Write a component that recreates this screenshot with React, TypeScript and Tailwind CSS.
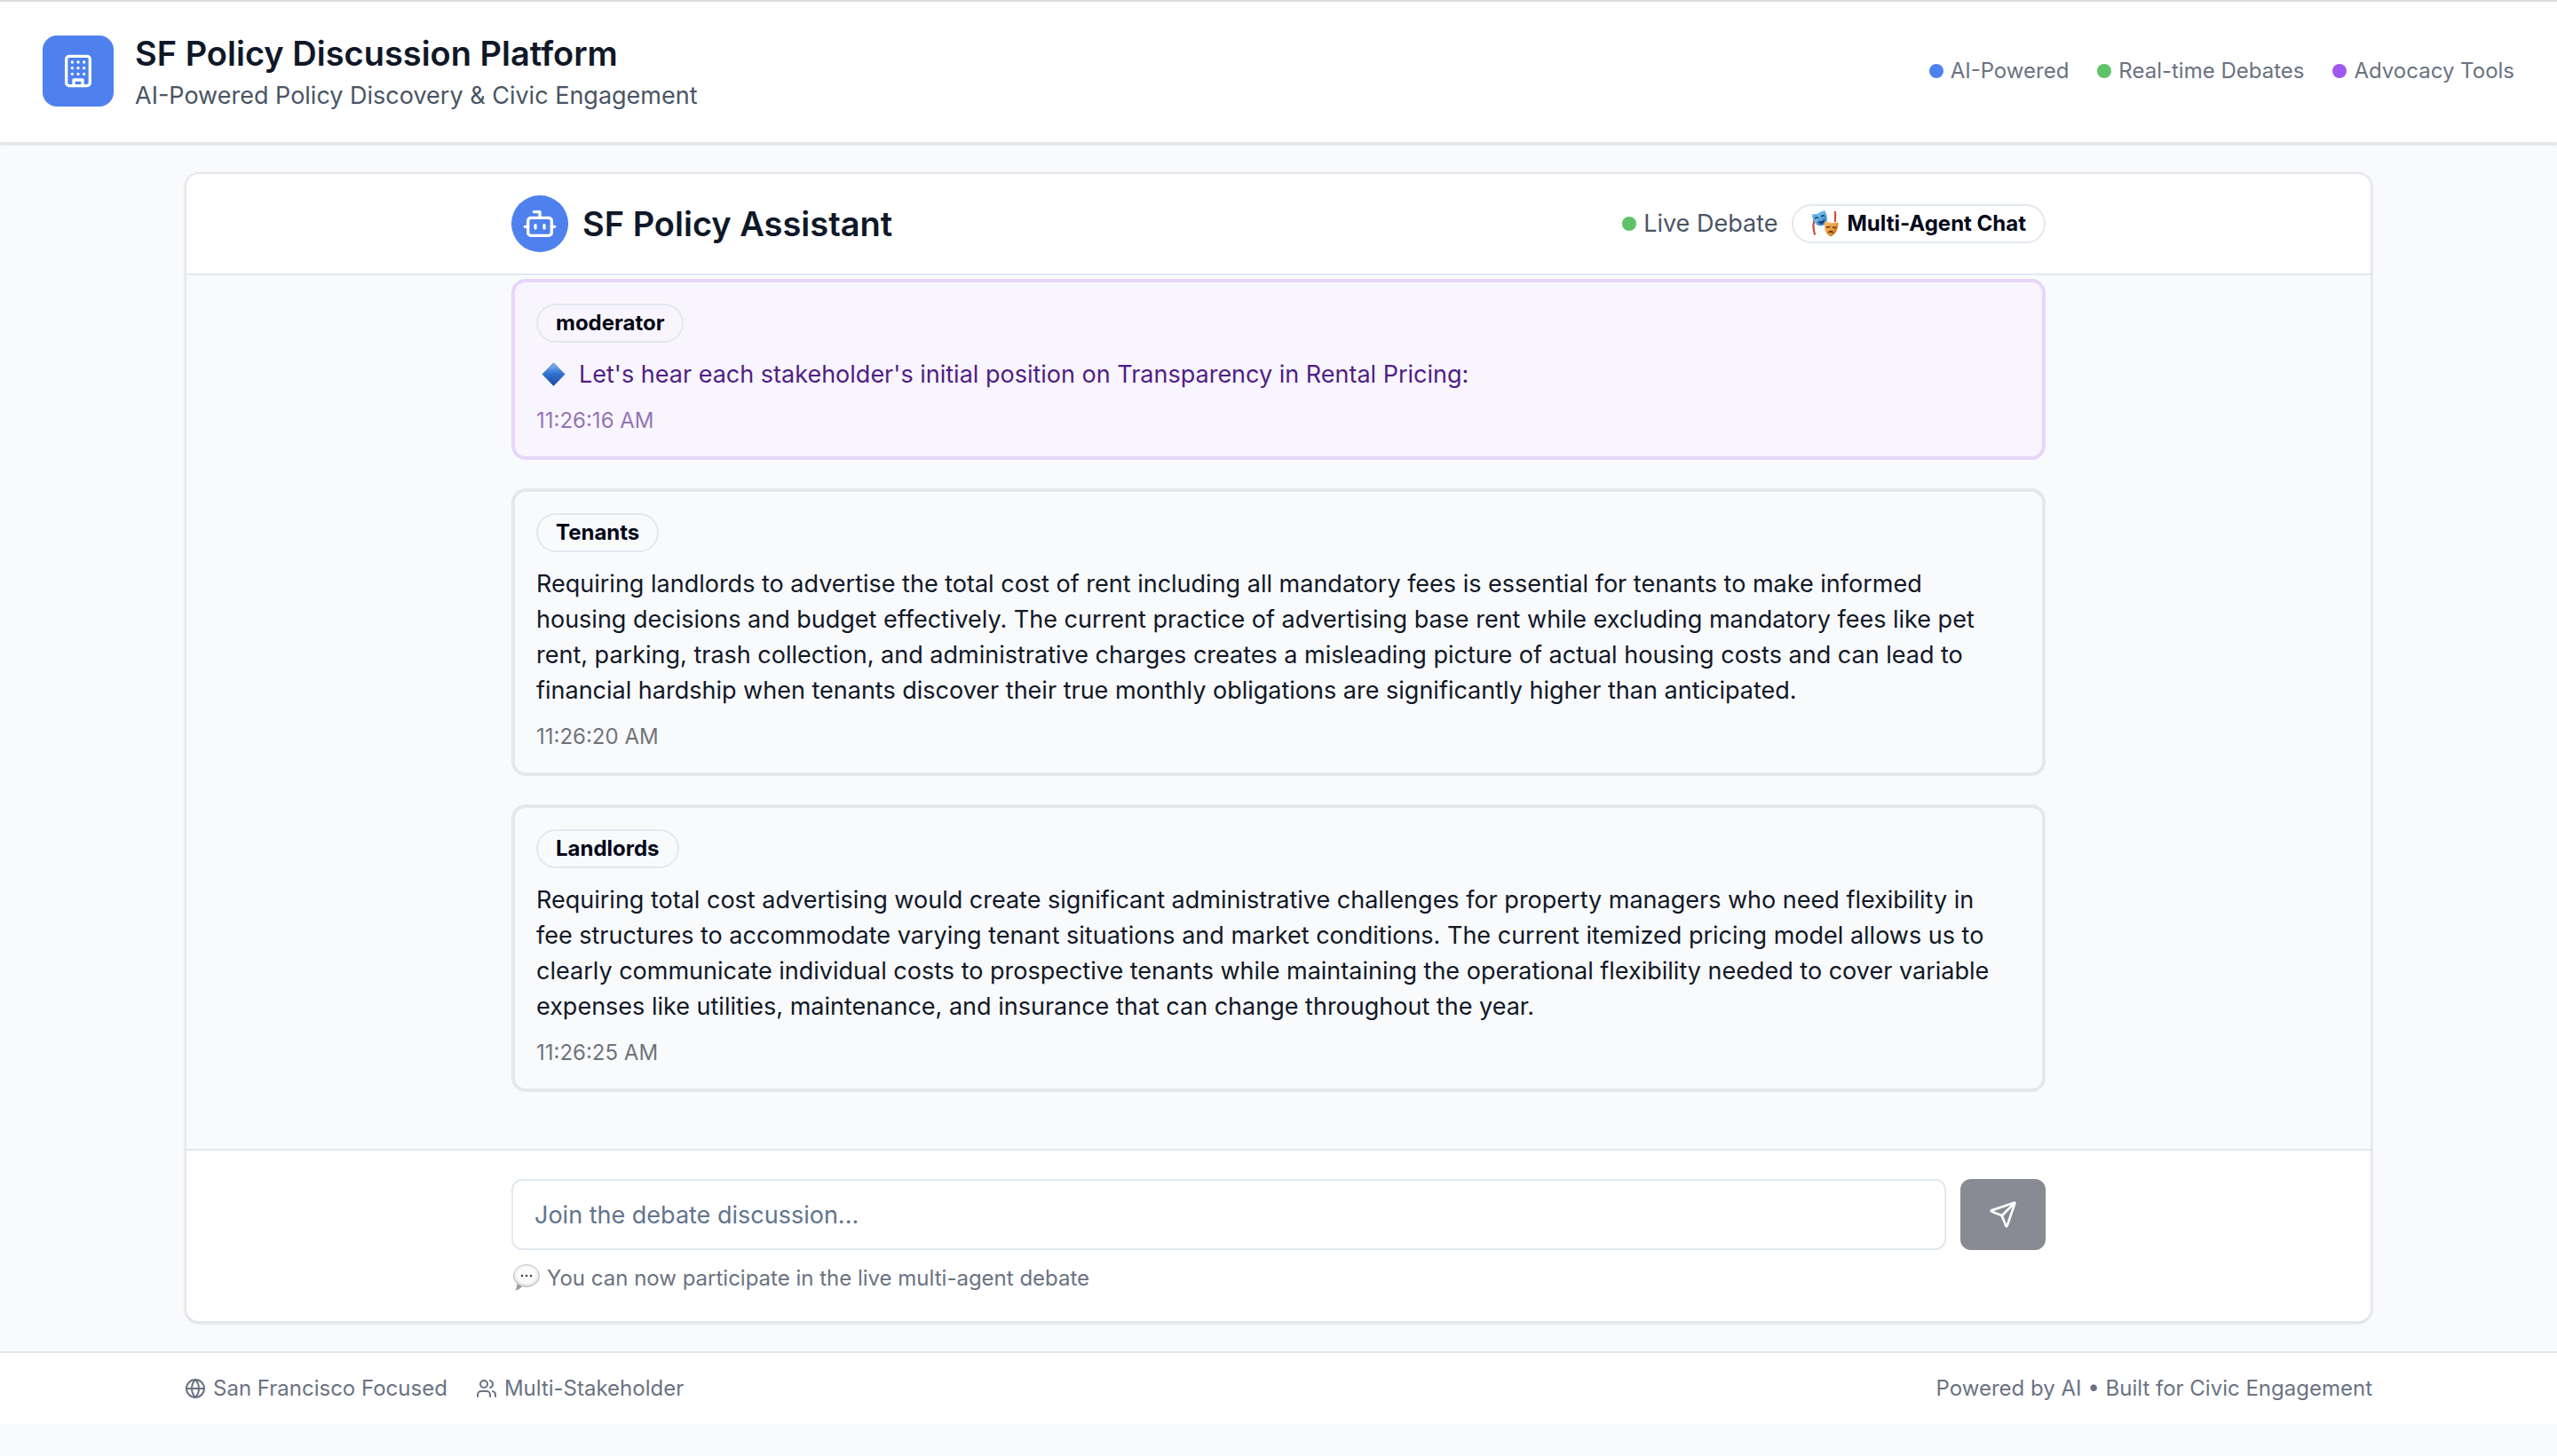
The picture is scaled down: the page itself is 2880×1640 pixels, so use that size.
import React, { useState } from 'react';
import { Bot, Globe, Send, Users } from 'lucide-react';

type Message = {
  id: number;
  speaker: string;
  text: string;
  time: string;
  kind: 'moderator' | 'stakeholder';
};

const messages: Message[] = [
  {
    id: 1,
    speaker: 'moderator',
    text: "Let's hear each stakeholder's initial position on Transparency in Rental Pricing:",
    time: '11:26:16 AM',
    kind: 'moderator',
  },
  {
    id: 2,
    speaker: 'Tenants',
    text: 'Requiring landlords to advertise the total cost of rent including all mandatory fees is essential for tenants to make informed housing decisions and budget effectively. The current practice of advertising base rent while excluding mandatory fees like pet rent, parking, trash collection, and administrative charges creates a misleading picture of actual housing costs and can lead to financial hardship when tenants discover their true monthly obligations are significantly higher than anticipated.',
    time: '11:26:20 AM',
    kind: 'stakeholder',
  },
  {
    id: 3,
    speaker: 'Landlords',
    text: 'Requiring total cost advertising would create significant administrative challenges for property managers who need flexibility in fee structures to accommodate varying tenant situations and market conditions. The current itemized pricing model allows us to clearly communicate individual costs to prospective tenants while maintaining the operational flexibility needed to cover variable expenses like utilities, maintenance, and insurance that can change throughout the year.',
    time: '11:26:25 AM',
    kind: 'stakeholder',
  },
];

const features = [
  { label: 'AI-Powered', dot: 'bg-[#4f81ee]' },
  { label: 'Real-time Debates', dot: 'bg-[#5ec269]' },
  { label: 'Advocacy Tools', dot: 'bg-[#9f58f0]' },
];

function BuildingIcon() {
  return (
    <svg
      viewBox="0 0 24 24"
      className="size-10 text-white"
      fill="none"
      stroke="currentColor"
      strokeWidth="2"
      strokeLinecap="round"
      strokeLinejoin="round"
      aria-hidden="true"
    >
      <rect width="16" height="20" x="4" y="2" rx="2" ry="2" />
      <path d="M9 22v-4h6v4" />
      <path d="M8 6h.01M16 6h.01M12 6h.01M12 10h.01M12 14h.01M16 10h.01M16 14h.01M8 10h.01M8 14h.01" />
    </svg>
  );
}

function MasksIcon() {
  return (
    <svg viewBox="0 0 32 32" className="size-8 shrink-0" fill="none" aria-hidden="true">
      <defs>
        <linearGradient id="blueMask" x1="0" y1="0" x2="1" y2="1">
          <stop offset="0" stopColor="#4f9fe0" />
          <stop offset="0.45" stopColor="#6db9f0" />
          <stop offset="1" stopColor="#1c5a9e" />
        </linearGradient>
        <linearGradient id="goldMask" x1="0" y1="0" x2="1" y2="1">
          <stop offset="0" stopColor="#f9c067" />
          <stop offset="0.5" stopColor="#eea043" />
          <stop offset="1" stopColor="#a85a18" />
        </linearGradient>
      </defs>
      <path d="M2.500 8c2 5-.6 8 0 12s.6 6 1.800 8.500" stroke="#d04a36" strokeWidth="2.200" />
      <path d="M26.500 2c2 4-.4 7 .6 12" stroke="#d04a36" strokeWidth="2.200" />
      <path d="M1.300 5C4 5.800 6 5.600 8.500 4S13 1.500 15.500 1.300c1.500 3.500 2.800 7.500 2 11.200-.7 3.300-3.500 5.800-7 5.800C4.500 18.300 1 11.500 1.300 5Z" fill="url(#blueMask)" />
      <path d="M4.500 9.800c1-1 2.500-1 3.500-.3M11.500 7.800c.8-1 2-1.200 3-.6" stroke="#173a63" strokeWidth="1.500" strokeLinecap="round" />
      <path d="M7 13.300c3 .7 5.500 0 8-2.300-.3 3-1.500 4.600-3.500 4.900-2 .2-3.700-.9-4.500-2.600Z" fill="#173a63" />
      <path d="M15.500 13.500c2.500 0 4 1 6.500 1.500s5-.2 8.500-.5c.3 7-2.500 13.500-8.500 16C16 28 13.500 20.500 15.500 13.500Z" fill="url(#goldMask)" />
      <path d="M17.500 19.500c1.200.6 2.300.6 3.300-.2M24.500 19.800c1 .8 2.200.8 3.300.2" stroke="#6a3510" strokeWidth="1.500" strokeLinecap="round" />
      <path d="M18.500 26.800c1-4 6-4 7 .2-2-1.500-5-1.500-7-.2Z" fill="#6a3510" />
    </svg>
  );
}

function DiamondIcon() {
  return (
    <svg viewBox="0 0 40 40" className="size-10 shrink-0" aria-hidden="true">
      <defs>
        <linearGradient id="diamond" x1="0" y1="0" x2="0" y2="1">
          <stop offset="0" stopColor="#8cc0f4" />
          <stop offset="0.45" stopColor="#3273d3" />
          <stop offset="1" stopColor="#1c4c9f" />
        </linearGradient>
      </defs>
      <path d="M19.500 7 32 19.500 19.500 32.500 7 19.500Z" fill="url(#diamond)" stroke="#2a62b4" strokeWidth="0.800" />
    </svg>
  );
}

function BubbleIcon() {
  return (
    <svg viewBox="0 0 32 32" className="size-8 shrink-0" aria-hidden="true">
      <defs>
        <radialGradient id="bubble" cx="0.5" cy="0.45" r="0.55">
          <stop offset="0.6" stopColor="#fcfcfc" />
          <stop offset="0.85" stopColor="#ececec" />
          <stop offset="1" stopColor="#bdbdbd" />
        </radialGradient>
      </defs>
      <path d="M6 22c.5 3-.3 5-1.500 7.500 3-.5 5.500-2 7.500-4.500Z" fill="#9c9c9c" />
      <ellipse cx="17" cy="13" rx="14.500" ry="12.500" fill="url(#bubble)" stroke="#b5b5b5" strokeWidth="0.800" />
      <circle cx="12" cy="13" r="1.300" fill="#444" />
      <circle cx="17" cy="13" r="1.300" fill="#444" />
      <circle cx="22" cy="13" r="1.300" fill="#444" />
    </svg>
  );
}

function Badge({ children }: { children: React.ReactNode }) {
  return (
    <span className="inline-flex items-center gap-2 rounded-full border-2 border-slate-200 px-5 py-1 text-2xl leading-8 font-bold text-slate-950">
      {children}
    </span>
  );
}

function MessageCard({ message }: { message: Message }) {
  const isModerator = message.kind === 'moderator';

  return (
    <article
      className={
        isModerator
          ? 'rounded-2xl border-4 border-[#e6d6fb] bg-[#f9f5fe] p-6 text-[#501e85]'
          : 'rounded-2xl border-4 border-[#e5e7e9] bg-[#f9fafc] p-6 text-gray-900'
      }
    >
      <div className="mb-4 flex">
        <Badge>{message.speaker}</Badge>
      </div>
      <div className="flex items-center gap-2 pr-4 text-[27px] leading-10">
        {isModerator && <DiamondIcon />}
        <p>{message.text}</p>
      </div>
      <p className="mt-4 text-2xl leading-8 opacity-60">{message.time}</p>
    </article>
  );
}

export default function App() {
  const [draft, setDraft] = useState('');

  return (
    <div className="min-h-screen bg-[#f9fafc] font-['Inter','Liberation_Sans',sans-serif] text-gray-900">
      <header className="flex items-center justify-between border-t-2 border-b-2 border-t-[#dcdcdc] border-b-gray-200 bg-white px-12 pt-[30px] pb-8 shadow-sm">
        <div className="flex items-center gap-6">
          <div className="flex size-20 items-center justify-center rounded-2xl bg-[#4f81ee]">
            <BuildingIcon />
          </div>
          <div>
            <h1 className="text-[38px] leading-[56px] font-semibold">SF Policy Discussion Platform</h1>
            <p className="text-[27px] leading-10 text-gray-600">AI-Powered Policy Discovery &amp; Civic Engagement</p>
          </div>
        </div>
        <ul className="flex items-center gap-8 text-2xl leading-8 text-gray-500">
          {features.map((feature) => (
            <li key={feature.label} className="flex items-center gap-2">
              <span className={`size-4 rounded-full ${feature.dot}`} />
              {feature.label}
            </li>
          ))}
        </ul>
      </header>

      <main className="mx-auto max-w-[2560px] px-12 py-8">
        <section className="overflow-hidden rounded-2xl border-2 border-gray-200 bg-white shadow-sm">
          <div className="border-b-2 border-slate-200 py-6">
            <div className="mx-auto flex max-w-[1792px] items-center justify-between px-8">
              <div className="flex items-center gap-4">
                <div className="flex size-16 items-center justify-center rounded-full bg-[#4f81ee]">
                  <Bot className="size-10 text-white" />
                </div>
                <h2 className="text-[38px] leading-[56px] font-semibold">SF Policy Assistant</h2>
              </div>
              <div className="flex items-center gap-4">
                <div className="flex items-center gap-2 text-[27px] leading-10 text-gray-600">
                  <span className="size-4 rounded-full bg-[#5ec269]" />
                  Live Debate
                </div>
                <Badge>
                  <MasksIcon />
                  Multi-Agent Chat
                </Badge>
              </div>
            </div>
          </div>

          <div className="bg-[#f9fafc] pt-1 pb-16">
            <div className="mx-auto flex max-w-[1792px] flex-col gap-8 px-8">
              {messages.map((message) => (
                <MessageCard key={message.id} message={message} />
              ))}
            </div>
          </div>

          <div className="border-t-2 border-slate-200 py-8">
            <div className="mx-auto max-w-[1792px] px-8">
              <form className="flex gap-4" onSubmit={(e) => e.preventDefault()}>
                <input
                  type="text"
                  aria-label="Join the debate discussion"
                  placeholder="Join the debate discussion..."
                  value={draft}
                  onChange={(e) => setDraft(e.target.value)}
                  className="h-20 min-w-0 flex-1 rounded-xl border-2 border-slate-200 bg-white px-6 text-[27px] placeholder:text-slate-500"
                />
                <button
                  type="submit"
                  aria-label="Send"
                  className="flex h-20 w-24 items-center justify-center rounded-xl bg-[#888b94] text-white"
                >
                  <Send className="size-8" />
                </button>
              </form>
              <p className="mt-4 flex items-center gap-2 text-2xl leading-8 text-gray-500">
                <BubbleIcon />
                You can now participate in the live multi-agent debate
              </p>
            </div>
          </div>
        </section>
      </main>

      <footer className="border-t-2 border-gray-200 bg-white py-6">
        <div className="mx-auto flex max-w-[2560px] items-center justify-between px-12 text-2xl leading-8 text-gray-500">
          <div className="flex items-center gap-8">
            <span className="flex items-center gap-2">
              <Globe className="size-6" />
              San Francisco Focused
            </span>
            <span className="flex items-center gap-2">
              <Users className="size-6" />
              Multi-Stakeholder
            </span>
          </div>
          <p>Powered by AI • Built for Civic Engagement</p>
        </div>
      </footer>
    </div>
  );
}
